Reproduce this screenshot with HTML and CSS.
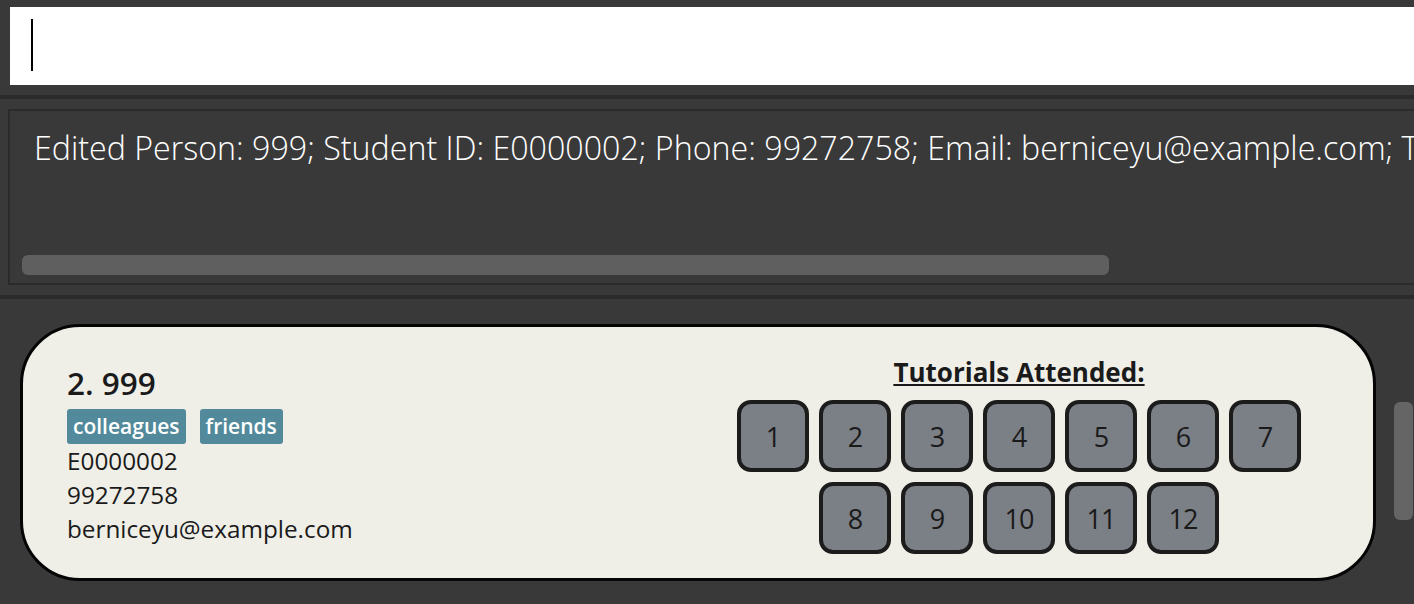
FILE: index.html
```html
<!DOCTYPE html>
<html lang="en">
<head>
<meta charset="utf-8">
<title>Address book</title>
<link rel="stylesheet" href="styles.css">
</head>
<body>
<div class="app">
  <div class="command">
    <div class="command-input"><span class="caret"></span></div>
  </div>
  <div class="divider"></div>
  <div class="result-wrap">
    <div class="result">
      <div class="result-text">Edited Person: 999; Student ID: E0000002; Phone: 99272758; Email: berniceyu@example.com; Tags: [colleagues][friends]</div>
      <div class="hscroll"></div>
    </div>
  </div>
  <div class="divider"></div>
  <div class="list">
    <div class="card">
      <div class="info">
        <div class="name">2. 999</div>
        <div class="tags">
          <span class="tag">colleagues</span>
          <span class="tag">friends</span>
        </div>
        <div class="line">E0000002</div>
        <div class="line">99272758</div>
        <div class="line">berniceyu@example.com</div>
      </div>
      <div class="tutorials">
        <div class="tut-title">Tutorials Attended:</div>
        <div class="tut-grid">
          <span class="tut">1</span><span class="tut">2</span><span class="tut">3</span><span class="tut">4</span><span class="tut">5</span><span class="tut">6</span><span class="tut">7</span>
          <span class="tut">8</span><span class="tut">9</span><span class="tut">10</span><span class="tut">11</span><span class="tut">12</span>
        </div>
      </div>
    </div>
    <div class="vtrack"><div class="vthumb"></div></div>
  </div>
</div>
</body>
</html>
```
FILE: styles.css
```css
html, body {
  margin: 0;
  padding: 0;
}
body {
  background: #393939;
  width: 1414px;
  height: 604px;
  overflow: hidden;
  font-family: "Open Sans", "Noto Sans", sans-serif;
}
.app {
  display: flex;
  flex-direction: column;
}
.command {
  padding: 7px 0 0 10px;
  height: 95px;
  box-sizing: border-box;
}
.command-input {
  background: #ffffff;
  height: 78px;
  width: 1420px;
  padding: 12px 0 0 21px;
  box-sizing: border-box;
}
.caret {
  display: block;
  width: 2px;
  height: 52px;
  background: #000;
}
.divider {
  height: 4px;
  background: #2b2b2b;
}
.result-wrap {
  padding: 10px 0 10px 8px;
  overflow: hidden;
}
.result {
  border: 2px solid #2b2b2b;
  border-right: none;
  height: 176px;
  box-sizing: border-box;
  width: 1420px;
  padding: 0 0 0 12px;
  display: flex;
  flex-direction: column;
}
.result-text {
  color: #ffffff;
  font-weight: 300;
  font-size: 32.2px;
  line-height: 40px;
  white-space: nowrap;
  padding: 17px 0 0 12px;
  height: 144px;
  box-sizing: border-box;
}
.hscroll {
  width: 1087px;
  height: 20px;
  background: #5f5f5f;
  border-radius: 6px;
}
.list {
  display: flex;
  padding: 25px 0 0 20px;
  gap: 18px;
}
.card {
  width: 1356px;
  height: 257px;
  box-sizing: border-box;
  border: 3px solid #050505;
  border-radius: 60px;
  background: #efefe8;
  display: flex;
  padding: 36px 34px 0 44px;
}
.info {
  flex: 1;
  color: #1a1a1a;
}
.name {
  font-size: 31.5px;
  font-weight: 600;
  line-height: 40px;
}
.tags {
  display: flex;
  gap: 14px;
  margin-top: 6px;
}
.tag {
  background: #528a9b;
  color: #fff;
  font-size: 21px;
  font-weight: 600;
  line-height: 35px;
  padding: 0 6px;
  border-radius: 3px;
}
.line {
  font-size: 24.3px;
  line-height: 34px;
}
.line:first-of-type {
  margin-top: 2px;
}
.tutorials {
  width: 640px;
  display: flex;
  flex-direction: column;
  align-items: center;
  margin-top: -8px;
}
.tut-title {
  font-size: 26px;
  font-weight: 700;
  line-height: 34px;
  text-decoration: underline;
  color: #1a1a1a;
}
.tut-grid {
  display: flex;
  flex-wrap: wrap;
  justify-content: center;
  gap: 10px;
  width: 564px;
  margin-top: 11px;
}
.tut {
  width: 72px;
  height: 72px;
  box-sizing: border-box;
  border: 4px solid #1c1c1c;
  border-radius: 14px;
  background: #7b7f86;
  display: flex;
  align-items: center;
  justify-content: center;
  font-size: 27px;
  letter-spacing: -1px;
  color: #1a1a1a;
}
.vtrack {
  padding-top: 78px;
}
.vthumb {
  width: 19px;
  height: 118px;
  background: #656565;
  border-radius: 6px;
}
```
